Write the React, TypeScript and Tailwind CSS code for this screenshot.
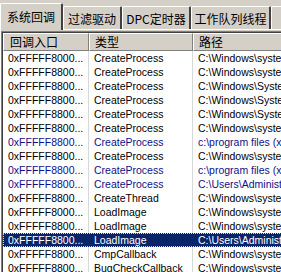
import React from "react";

type Row = { a: string; b: string; c: string; blue?: boolean; sel?: boolean };

const rows: Row[] = [
  { a: "0xFFFFF8000...", b: "CreateProcess", c: "C:\\Windows\\system32\\ntoskrnl.exe" },
  { a: "0xFFFFF8800...", b: "CreateProcess", c: "C:\\Windows\\system32\\drivers" },
  { a: "0xFFFFF8800...", b: "CreateProcess", c: "C:\\Windows\\System32\\drivers" },
  { a: "0xFFFFF8800...", b: "CreateProcess", c: "C:\\Windows\\System32\\drivers" },
  { a: "0xFFFFF8800...", b: "CreateProcess", c: "C:\\Windows\\System32\\drivers" },
  { a: "0xFFFFF8800...", b: "CreateProcess", c: "C:\\Windows\\system32\\drivers" },
  { a: "0xFFFFF8800...", b: "CreateProcess", c: "c:\\program files (x86)\\", blue: true },
  { a: "0xFFFFF8800...", b: "CreateProcess", c: "C:\\Windows\\system32\\drivers" },
  { a: "0xFFFFF8800...", b: "CreateProcess", c: "c:\\program files (x86)\\", blue: true },
  { a: "0xFFFFF8800...", b: "CreateProcess", c: "C:\\Users\\Administrator\\", blue: true },
  { a: "0xFFFFF8800...", b: "CreateThread", c: "C:\\Windows\\system32\\drivers" },
  { a: "0xFFFFF8000...", b: "LoadImage", c: "C:\\Windows\\system32\\ntoskrnl.exe" },
  { a: "0xFFFFF8800...", b: "LoadImage", c: "C:\\Windows\\system32\\drivers" },
  { a: "0xFFFFF8800...", b: "LoadImage", c: "C:\\Users\\Administrator\\", sel: true },
  { a: "0xFFFFF8800...", b: "CmpCallback", c: "C:\\Windows\\system32\\drivers" },
  { a: "0xFFFFF8800...", b: "BugCheckCallback", c: "C:\\Windows\\system32\\drivers" },
];

const latin = "font-['Liberation_Sans','Noto_Sans_CJK_SC',sans-serif] text-[10.5px]";
const cjk = "font-['Noto_Sans_CJK_SC',sans-serif] text-[12px]";

function Tab({ label, active, w }: { label: string; active?: boolean; w: string }) {
  if (active) {
    return (
      <div
        className={`${w} h-[27px] -mb-px relative z-10 bg-[#d4d0c8] border-t border-l border-white border-r-2 border-r-[#404040] rounded-tl-[2px] rounded-tr-[2px] flex items-start justify-center pt-[7px] leading-none text-black ${cjk}`}
      >
        {label}
      </div>
    );
  }
  return (
    <div
      className={`${w} h-[23px] bg-[#d4d0c8] border-t border-l border-white border-r-2 border-r-[#404040] rounded-tl-[2px] rounded-tr-[2px] flex items-start justify-center pt-[6px] leading-none text-black ${cjk}`}
    >
      {label}
    </div>
  );
}

export default function App() {
  return (
    <div className="w-[281px] h-[272px] bg-[#d4d0c8] overflow-hidden">
      <div className="w-[400px]">
        <div className="flex items-end h-[29px] pt-[2px]">
          <Tab label="系统回调" active w="w-[63px]" />
          <Tab label="过滤驱动" w="w-[59px]" />
          <Tab label="DPC定时器" w="w-[69px]" />
          <Tab label="工作队列线程" w="w-[80px]" />
          <Tab label="Hook" w="w-[60px]" />
        </div>
        <div className="border-t border-l border-white pt-px">
          <div className="border-t border-l border-[#808080]">
            <div className="border-t border-l border-[#404040] bg-white">
              <div className={`flex h-[18px] ${cjk} leading-none`}>
                <div className="w-[86px] bg-[#d4d0c8] border-t border-l border-white border-r border-b border-r-[#808080] border-b-[#808080] flex items-center pl-[6px]">
                  回调入口
                </div>
                <div className="w-[104px] bg-[#d4d0c8] border-t border-l border-white border-r border-b border-r-[#808080] border-b-[#808080] flex items-center pl-[5px]">
                  类型
                </div>
                <div className="flex-1 bg-[#d4d0c8] border-t border-l border-white border-b border-b-[#808080] flex items-center pl-[5px]">
                  路径
                </div>
              </div>
              {rows.map((r, i) => {
                const color = r.sel
                  ? "text-white bg-[#0a246a] outline outline-1 outline-dotted outline-[#e8d8a0] -outline-offset-1"
                  : r.blue
                  ? "text-[#10108a]"
                  : "text-black";
                return (
                  <div key={i} className={`flex h-[14px] leading-[14px] ${latin} ${color} whitespace-nowrap`}>
                    <div className={`w-[86px] overflow-hidden pl-[5px] border-r ${r.sel ? "border-[#0a246a]" : "border-[#d8d8d8]"}`}>{r.a}</div>
                    <div className={`w-[104px] overflow-hidden pl-[5px] border-r ${r.sel ? "border-[#0a246a]" : "border-[#d8d8d8]"}`}>{r.b}</div>
                    <div className="flex-1 overflow-hidden pl-[5px]">{r.c}</div>
                  </div>
                );
              })}
            </div>
          </div>
        </div>
      </div>
    </div>
  );
}
